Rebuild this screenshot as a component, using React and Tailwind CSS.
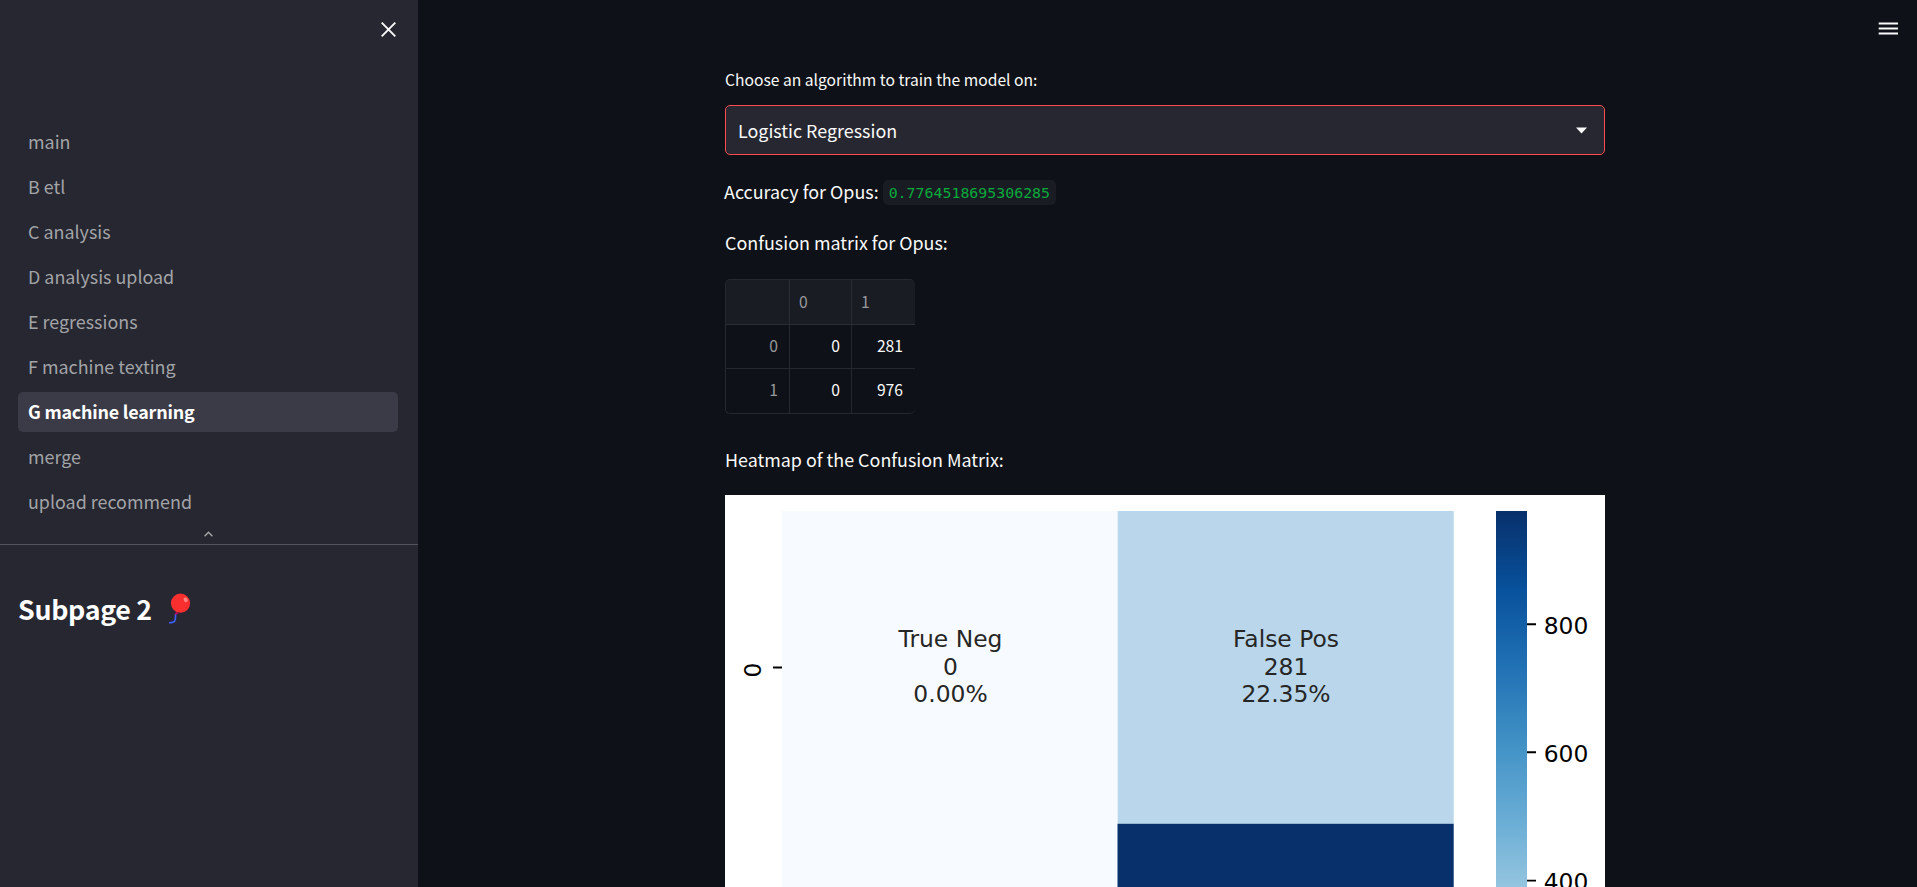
const SANS = "font-['Noto_Sans_CJK_SC','Noto_Sans',sans-serif]";

const NAV = [
  'main',
  'B etl',
  'C analysis',
  'D analysis upload',
  'E regressions',
  'F machine texting',
  'G machine learning',
  'merge',
  'upload recommend',
];

const ACTIVE = 'G machine learning';

const BLUES = ['#08306b', '#08519c', '#2171b5', '#4292c6', '#6baed6', '#9ecae1', '#c6dbef', '#deebf7', '#f7fbff'];

function Sidebar() {
  return (
    <aside className="flex w-[418px] shrink-0 flex-col bg-[#262730]">
      <div className="flex h-[122px] shrink-0 justify-end pt-[22px] pr-[22px]">
        <svg width="15" height="15" viewBox="0 0 15 15" fill="none" stroke="#fafafa" strokeWidth="1.9">
          <path d="M0.7 0.7 14.3 14.3M14.3 0.7 0.7 14.3" />
        </svg>
      </div>
      <nav className="flex flex-col gap-[5px] pr-5 pl-[18px]">
        {NAV.map((item) => (
          <a
            key={item}
            className={
              item === ACTIVE
                ? 'flex h-10 items-center rounded-[5px] bg-[#3b3b47] pb-[1px] pl-[10px] text-[17.9px] font-bold tracking-[-0.21px] text-white'
                : 'flex h-10 items-center rounded-[5px] pb-[1px] pl-[10px] text-[17.9px] text-[#a3a4a8]'
            }
          >
            {item}
          </a>
        ))}
      </nav>
      <div className="flex h-[23px] justify-center border-b border-[#53545c] pt-[9px] pr-[2px]">
        <svg width="9" height="6" viewBox="0 0 9 6" fill="none" stroke="#a3a4a8" strokeWidth="1.4">
          <path d="M0.6 5.3 4.5 1.2 8.4 5.3" />
        </svg>
      </div>
      <div className="flex items-start gap-[17px] pt-[44px] pl-[18px]">
        <h1 className="w-[133px] text-[26.8px] leading-10 font-bold tracking-[-0.32px] text-white">Subpage 2</h1>
        <svg width="24" height="32" viewBox="0 0 24 32" fill="none" className="mt-[4px]">
          <path d="M7.600 20.500C7.600 24 7.800 26 6.800 28c-.8 1.500-2.500 1.700-5.800 1.700" stroke="#3f5fff" strokeWidth="1.6" />
          <path d="M5.800 21.800 8.600 18.500l2.600 2.600z" fill="#ae0a5c" />
          <circle cx="12.500" cy="10.200" r="9.600" fill="#f92f2f" />
          <ellipse cx="17.700" cy="6.800" rx="2" ry="2.400" fill="#fd8280" transform="rotate(-35 17.700 6.800)" />
        </svg>
      </div>
    </aside>
  );
}

function MatrixTable() {
  return (
    <div className="grid w-[190px] grid-cols-[64px_62px_63px] grid-rows-[45px_44px_44px] overflow-hidden rounded-[5px] border-y border-l border-[#262830] text-[15.7px]">
      <div className="border-r border-b border-[#2b2d35] bg-[#1a1c24]" />
      <div className="flex items-center border-r border-b border-[#2b2d35] bg-[#1a1c24] pl-[9px] text-[#98999d]">0</div>
      <div className="flex items-center border-b border-[#2b2d35] bg-[#1a1c24] pl-[9px] text-[#98999d]">1</div>
      <div className="flex items-center justify-end border-r border-b border-[#262830] pr-[11px] pb-[2px] text-[#98999d]">0</div>
      <div className="flex items-center justify-end border-r border-b border-[#262830] pr-[11px] pb-[2px] text-[#fafafa]">0</div>
      <div className="flex items-center justify-end border-b border-[#262830] pr-[12px] pb-[2px] text-[#fafafa]">281</div>
      <div className="flex items-center justify-end border-r border-[#262830] pr-[11px] pb-[2px] text-[#98999d]">1</div>
      <div className="flex items-center justify-end border-r border-[#262830] pr-[11px] pb-[2px] text-[#fafafa]">0</div>
      <div className="flex items-center justify-end pr-[12px] pb-[2px] text-[#fafafa]">976</div>
    </div>
  );
}

function Heatmap() {
  return (
    <svg
      width="880"
      height="392"
      viewBox="0 0 880 392"
      className="block font-['DejaVu_Sans',sans-serif] text-[23.4px]"
    >
      <defs>
        <linearGradient id="blues" gradientUnits="userSpaceOnUse" x1="0" y1="16" x2="0" y2="641">
          {BLUES.map((c, i) => (
            <stop key={c} offset={i / 8} stopColor={c} />
          ))}
        </linearGradient>
      </defs>
      <rect width="880" height="392" fill="#fff" />
      <rect x="57" y="16" width="336" height="376" fill="#f7fbff" />
      <rect x="392.700" y="16" width="336" height="313" fill="#b9d6ea" />
      <rect x="392.500" y="328.800" width="336.200" height="64" fill="#08306b" />
      <rect x="771" y="16" width="31" height="376" fill="url(#blues)" />
      <path d="M48 172.500h9M802 129.300h9M802 257.300h9M802 385.600h9" stroke="#000" strokeWidth="1.900" />
      <g fill="#262626" textAnchor="middle">
        <text x="225.500" y="152">True Neg</text>
        <text x="225.500" y="180">0</text>
        <text x="225.500" y="207">0.00%</text>
        <text x="561" y="152">False Pos</text>
        <text x="561" y="180">281</text>
        <text x="561" y="207">22.35%</text>
      </g>
      <g fill="#000">
        <text x="818.700" y="138.500">800</text>
        <text x="818.700" y="267">600</text>
        <text x="818.700" y="395.300">400</text>
        <text transform="translate(36 175) rotate(-90)" textAnchor="middle">0</text>
      </g>
    </svg>
  );
}

export default function App() {
  return (
    <div className={`${SANS} flex h-[887px] w-[1917px] overflow-hidden bg-[#0e1117] whitespace-nowrap text-[#fafafa]`}>
      <Sidebar />
      <main className="flex flex-1 justify-between pl-[307px]">
        <div className="flex w-[880px] flex-col">
          <label className="mt-[65px] h-[30px] shrink-0 text-[15.65px] leading-[30px]">
            Choose an algorithm to train the model on:
          </label>
          <div className="mt-[10px] flex h-[50px] shrink-0 items-center justify-between rounded-[5px] border border-[#ff4b4b] bg-[#262730] pr-[17px] pl-[12px] text-[17.9px]">
            <span>Logistic Regression</span>
            <svg width="11" height="7" viewBox="0 0 11 7">
              <path d="M0 0.500h11L5.500 6.500z" fill="#fafafa" />
            </svg>
          </div>
          <div className="mt-[20px] flex h-8 shrink-0 items-center text-[17.9px]">
            <span className="-ml-px">Accuracy for Opus:</span>
            <code className="mt-[3px] ml-[4px] flex h-[25px] items-center rounded-[5px] bg-[#1a1c24] px-[6px] pt-[2px] font-['DejaVu_Sans_Mono',monospace] text-[14.9px] text-[#09ab3b]">
              0.7764518695306285
            </code>
          </div>
          <p className="mt-[19px] h-[33px] shrink-0 text-[17.9px] leading-8">Confusion matrix for Opus:</p>
          <div className="mt-5 shrink-0">
            <MatrixTable />
          </div>
          <p className="mt-[29px] h-8 shrink-0 text-[17.9px] leading-8">Heatmap of the Confusion Matrix:</p>
          <div className="mt-[20px] shrink-0">
            <Heatmap />
          </div>
        </div>
        <svg width="20" height="14" viewBox="0 0 20 14" className="mt-[22px] mr-[19px]" stroke="#fafafa" strokeWidth="2">
          <path d="M0.700 1.400H20M0.700 6.500H20M0.700 11.600H20" />
        </svg>
      </main>
    </div>
  );
}
